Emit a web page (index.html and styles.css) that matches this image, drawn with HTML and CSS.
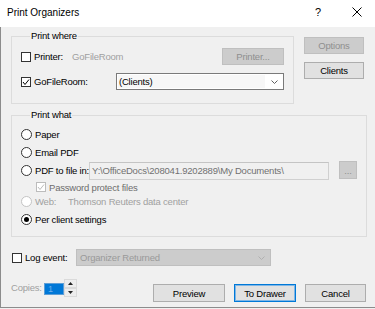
FILE: index.html
```html
<!DOCTYPE html>
<html lang="en">
<head>
    <meta charset="UTF-8">
    <title>Print Organizers</title>
    <link rel="stylesheet" href="styles.css">
</head>
<body>
<div class="window">
    <div class="titlebar">
        <span class="title">Print Organizers</span>
        <span class="help">?</span>
        <svg class="close" width="10" height="10" viewBox="0 0 10 10">
            <path d="M0.5 0.5 L9.5 9.5 M9.5 0.5 L0.5 9.5" stroke="#000" stroke-width="1" fill="none"/>
        </svg>
    </div>

    <div class="dialog">
        <div class="top">
            <fieldset class="group where">
                <legend>Print where</legend>
                <div class="row r-printer">
                    <span class="check"></span>
                    <span class="lbl w-printer">Printer:</span>
                    <span class="muted grow">GoFileRoom</span>
                    <span class="btn off printer-btn">Printer...</span>
                </div>
                <div class="row r-gfr">
                    <span class="check">
                        <svg width="8" height="8" viewBox="0 0 8 8"><polyline points="1,4 3,6.5 7,1.5" fill="none" stroke="#000" stroke-width="1"/></svg>
                    </span>
                    <span class="lbl w-gfr">GoFileRoom:</span>
                    <div class="combo">
                        <span class="combo-text">(Clients)</span>
                        <svg class="chev" width="7" height="4" viewBox="0 0 7 4"><polyline points="0.5,0.5 3.5,3.5 6.5,0.5" fill="none" stroke="#606060" stroke-width="1"/></svg>
                    </div>
                </div>
            </fieldset>
            <div class="side">
                <span class="btn off side-btn">Options</span>
                <span class="btn side-btn">Clients</span>
            </div>
        </div>

        <fieldset class="group what">
            <legend>Print what</legend>
            <div class="row h17">
                <span class="radio"></span>
                <span class="lbl">Paper</span>
            </div>
            <div class="row h18">
                <span class="radio"></span>
                <span class="lbl">Email PDF</span>
            </div>
            <div class="row h19">
                <span class="radio"></span>
                <span class="lbl w-pdf">PDF to file in:</span>
                <span class="path">Y:\OfficeDocs\208041.9202889\My Documents\</span>
                <span class="btn off dots">...</span>
            </div>
            <div class="row h14 indent">
                <span class="check dis">
                    <svg width="8" height="8" viewBox="0 0 8 8"><polyline points="1,4 3,6.5 7,1.5" fill="none" stroke="#bcbcbc" stroke-width="1"/></svg>
                </span>
                <span class="lbl gray">Password protect files</span>
            </div>
            <div class="row h15">
                <span class="radio dis"></span>
                <span class="lbl w-web light">Web:</span>
                <span class="light">Thomson Reuters data center</span>
            </div>
            <div class="row h20">
                <span class="radio on"></span>
                <span class="lbl">Per client settings</span>
            </div>
        </fieldset>

        <div class="log-row">
            <span class="check"></span>
            <span class="lbl w-log">Log event:</span>
            <div class="combo off">
                <span class="combo-text">Organizer Returned</span>
                <svg class="chev" width="7" height="4" viewBox="0 0 7 4"><polyline points="0.5,0.5 3.5,3.5 6.5,0.5" fill="none" stroke="#b0b0b0" stroke-width="1"/></svg>
            </div>
        </div>

        <div class="bottom-row">
            <span class="copies">Copies:</span>
            <span class="copies-box">1</span>
            <span class="spin">
                <span class="spin-half">
                    <svg width="5" height="3" viewBox="0 0 5 3"><polygon points="2.5,0 5,3 0,3" fill="#222"/></svg>
                </span>
                <span class="spin-half">
                    <svg width="5" height="3" viewBox="0 0 5 3"><polygon points="0,0 5,0 2.5,3" fill="#222"/></svg>
                </span>
            </span>
            <span class="btn preview">Preview</span>
            <span class="btn default drawer">To Drawer</span>
            <span class="btn cancel">Cancel</span>
        </div>
    </div>
</div>
</body>
</html>
```

FILE: styles.css
```css
body {
    margin: 0;
    font-family: "Liberation Sans", Arial, sans-serif;
    font-size: 9.5px;
    letter-spacing: -0.2px;
    color: #000;
    background: #f0f0f0;
}
.window {
    width: 375px;
    height: 309px;
    overflow: hidden;
}
.titlebar {
    height: 27px;
    background: #fff;
    display: flex;
    align-items: center;
    padding-left: 7px;
    box-sizing: border-box;
}
.title {
    font-size: 10px;
    letter-spacing: 0;
    flex: 1;
    margin-top: -2px;
}
.help {
    font-size: 11px;
    margin-right: 31px;
    margin-top: -3px;
}
.close {
    margin-right: 13px;
    margin-top: -3px;
}
.dialog {
    height: 281px;
    border-left: 1px solid #8c8c8c;
    border-bottom: 1px solid #8c8c8c;
    padding: 3px 0 0 10px;
    box-sizing: border-box;
}

/* group boxes */
.group {
    margin: 0;
    border: 1px solid #dcdcdc;
    box-sizing: border-box;
    min-width: 0;
}
.group legend {
    line-height: 12px;
    padding: 0 1px;
    margin-left: 9px;
}
.top {
    display: flex;
}
.where {
    width: 283px;
    padding: 6px 9px 13px 9px;
}
.side {
    display: flex;
    flex-direction: column;
    gap: 8px;
    margin-left: 10px;
    margin-top: 7px;
}
.what {
    width: 356px;
    margin-top: 5px;
    padding: 5px 9px 7px 9px;
}

/* rows */
.row {
    display: flex;
    align-items: center;
}
.r-printer { height: 17px; }
.r-gfr { height: 17px; margin-top: 8px; }
.h14 { height: 14px; }
.h15 { height: 15px; }
.h17 { height: 17px; }
.h18 { height: 18px; }
.h19 { height: 19px; }
.h20 { height: 20px; }
.indent { padding-left: 15px; }
.grow { flex: 1; }

.lbl { margin-left: 3px; white-space: nowrap; }
.w-printer { width: 38px; }
.w-gfr { width: 85px; }
.w-pdf { width: 57px; }
.w-web { width: 33px; }
.w-log { width: 51px; }
.muted, .light { color: #a0a0a0; }
.gray { color: #6d6d6d; }

/* checkbox and radio */
.check {
    width: 10px;
    height: 10px;
    border: 1px solid #333;
    background: #fff;
    box-sizing: border-box;
    flex-shrink: 0;
    display: flex;
    align-items: center;
    justify-content: center;
}
.check.dis { border-color: #bcbcbc; }
.radio {
    width: 11px;
    height: 11px;
    border: 1px solid #333;
    border-radius: 50%;
    background: #fff;
    box-sizing: border-box;
    flex-shrink: 0;
    display: flex;
    align-items: center;
    justify-content: center;
}
.radio.dis { border-color: #c4c4c4; }
.radio.on::after {
    content: "";
    width: 5px;
    height: 5px;
    border-radius: 50%;
    background: #000;
}

/* buttons */
.btn {
    display: flex;
    align-items: center;
    justify-content: center;
    height: 17px;
    background: #e1e1e1;
    border: 1px solid #adadad;
    box-sizing: border-box;
    flex-shrink: 0;
}
.btn.off {
    background: #cccccc;
    border-color: #bfbfbf;
    color: #8f8f8f;
}
.btn.default {
    border-color: #0078d7;
    box-shadow: inset 0 0 0 1px #7fb6e6;
}
.printer-btn { width: 62px; }
.side-btn { width: 60px; }
.dots {
    width: 18px;
    height: 18px;
    margin-left: 10px;
    margin-top: -1px;
}

/* combos and text boxes */
.combo {
    width: 168px;
    height: 17px;
    border: 1px solid #7a7a7a;
    background: #fff;
    box-sizing: border-box;
    display: flex;
    align-items: center;
    flex-shrink: 0;
}
.combo-text {
    flex: 1;
    align-self: stretch;
    display: flex;
    align-items: center;
    padding-left: 1px;
    margin: 1px 0 1px 1px;
    background: #f7f7f7;
}
.chev { margin: 0 5px 0 6px; }
.combo.off {
    width: 195px;
    border-color: #bfbfbf;
    background: #cccccc;
    color: #9a9a9a;
}
.combo.off .combo-text {
    background: transparent;
    padding-left: 2px;
}
.path {
    width: 240px;
    height: 18px;
    border: 1px solid #d0d0d0;
    border-top-color: #c4c4c4;
    background: #f0f0f0;
    box-sizing: border-box;
    color: #707070;
    display: flex;
    align-items: center;
    padding-left: 2px;
    flex-shrink: 0;
    white-space: nowrap;
    overflow: hidden;
}

/* log + bottom */
.log-row {
    display: flex;
    align-items: center;
    height: 17px;
    margin-top: 12px;
    padding-left: 1px;
}
.bottom-row {
    display: flex;
    align-items: flex-start;
    height: 23px;
    margin-top: 13px;
}
.copies {
    width: 33px;
    color: #a0a0a0;
    margin-top: 3px;
}
.copies-box {
    width: 20px;
    height: 12px;
    margin-top: 4px;
    background: #0078d7;
    border: 1px solid #5e9ed6;
    box-sizing: border-box;
    color: #6fb0ee;
    font-size: 9px;
    line-height: 10px;
    padding-left: 3px;
}
.spin {
    display: flex;
    flex-direction: column;
    width: 13px;
}
.spin-half {
    height: 9px;
    background: #ededed;
    border: 1px solid #dadada;
    box-sizing: border-box;
    display: flex;
    align-items: center;
    justify-content: center;
}
.preview { width: 72px; height: 18px; margin-left: 76px; margin-top: 5px; }
.drawer { width: 62px; height: 18px; margin-left: 9px; margin-top: 5px; }
.cancel { width: 61px; height: 18px; margin-left: 9px; margin-top: 5px; }
```
